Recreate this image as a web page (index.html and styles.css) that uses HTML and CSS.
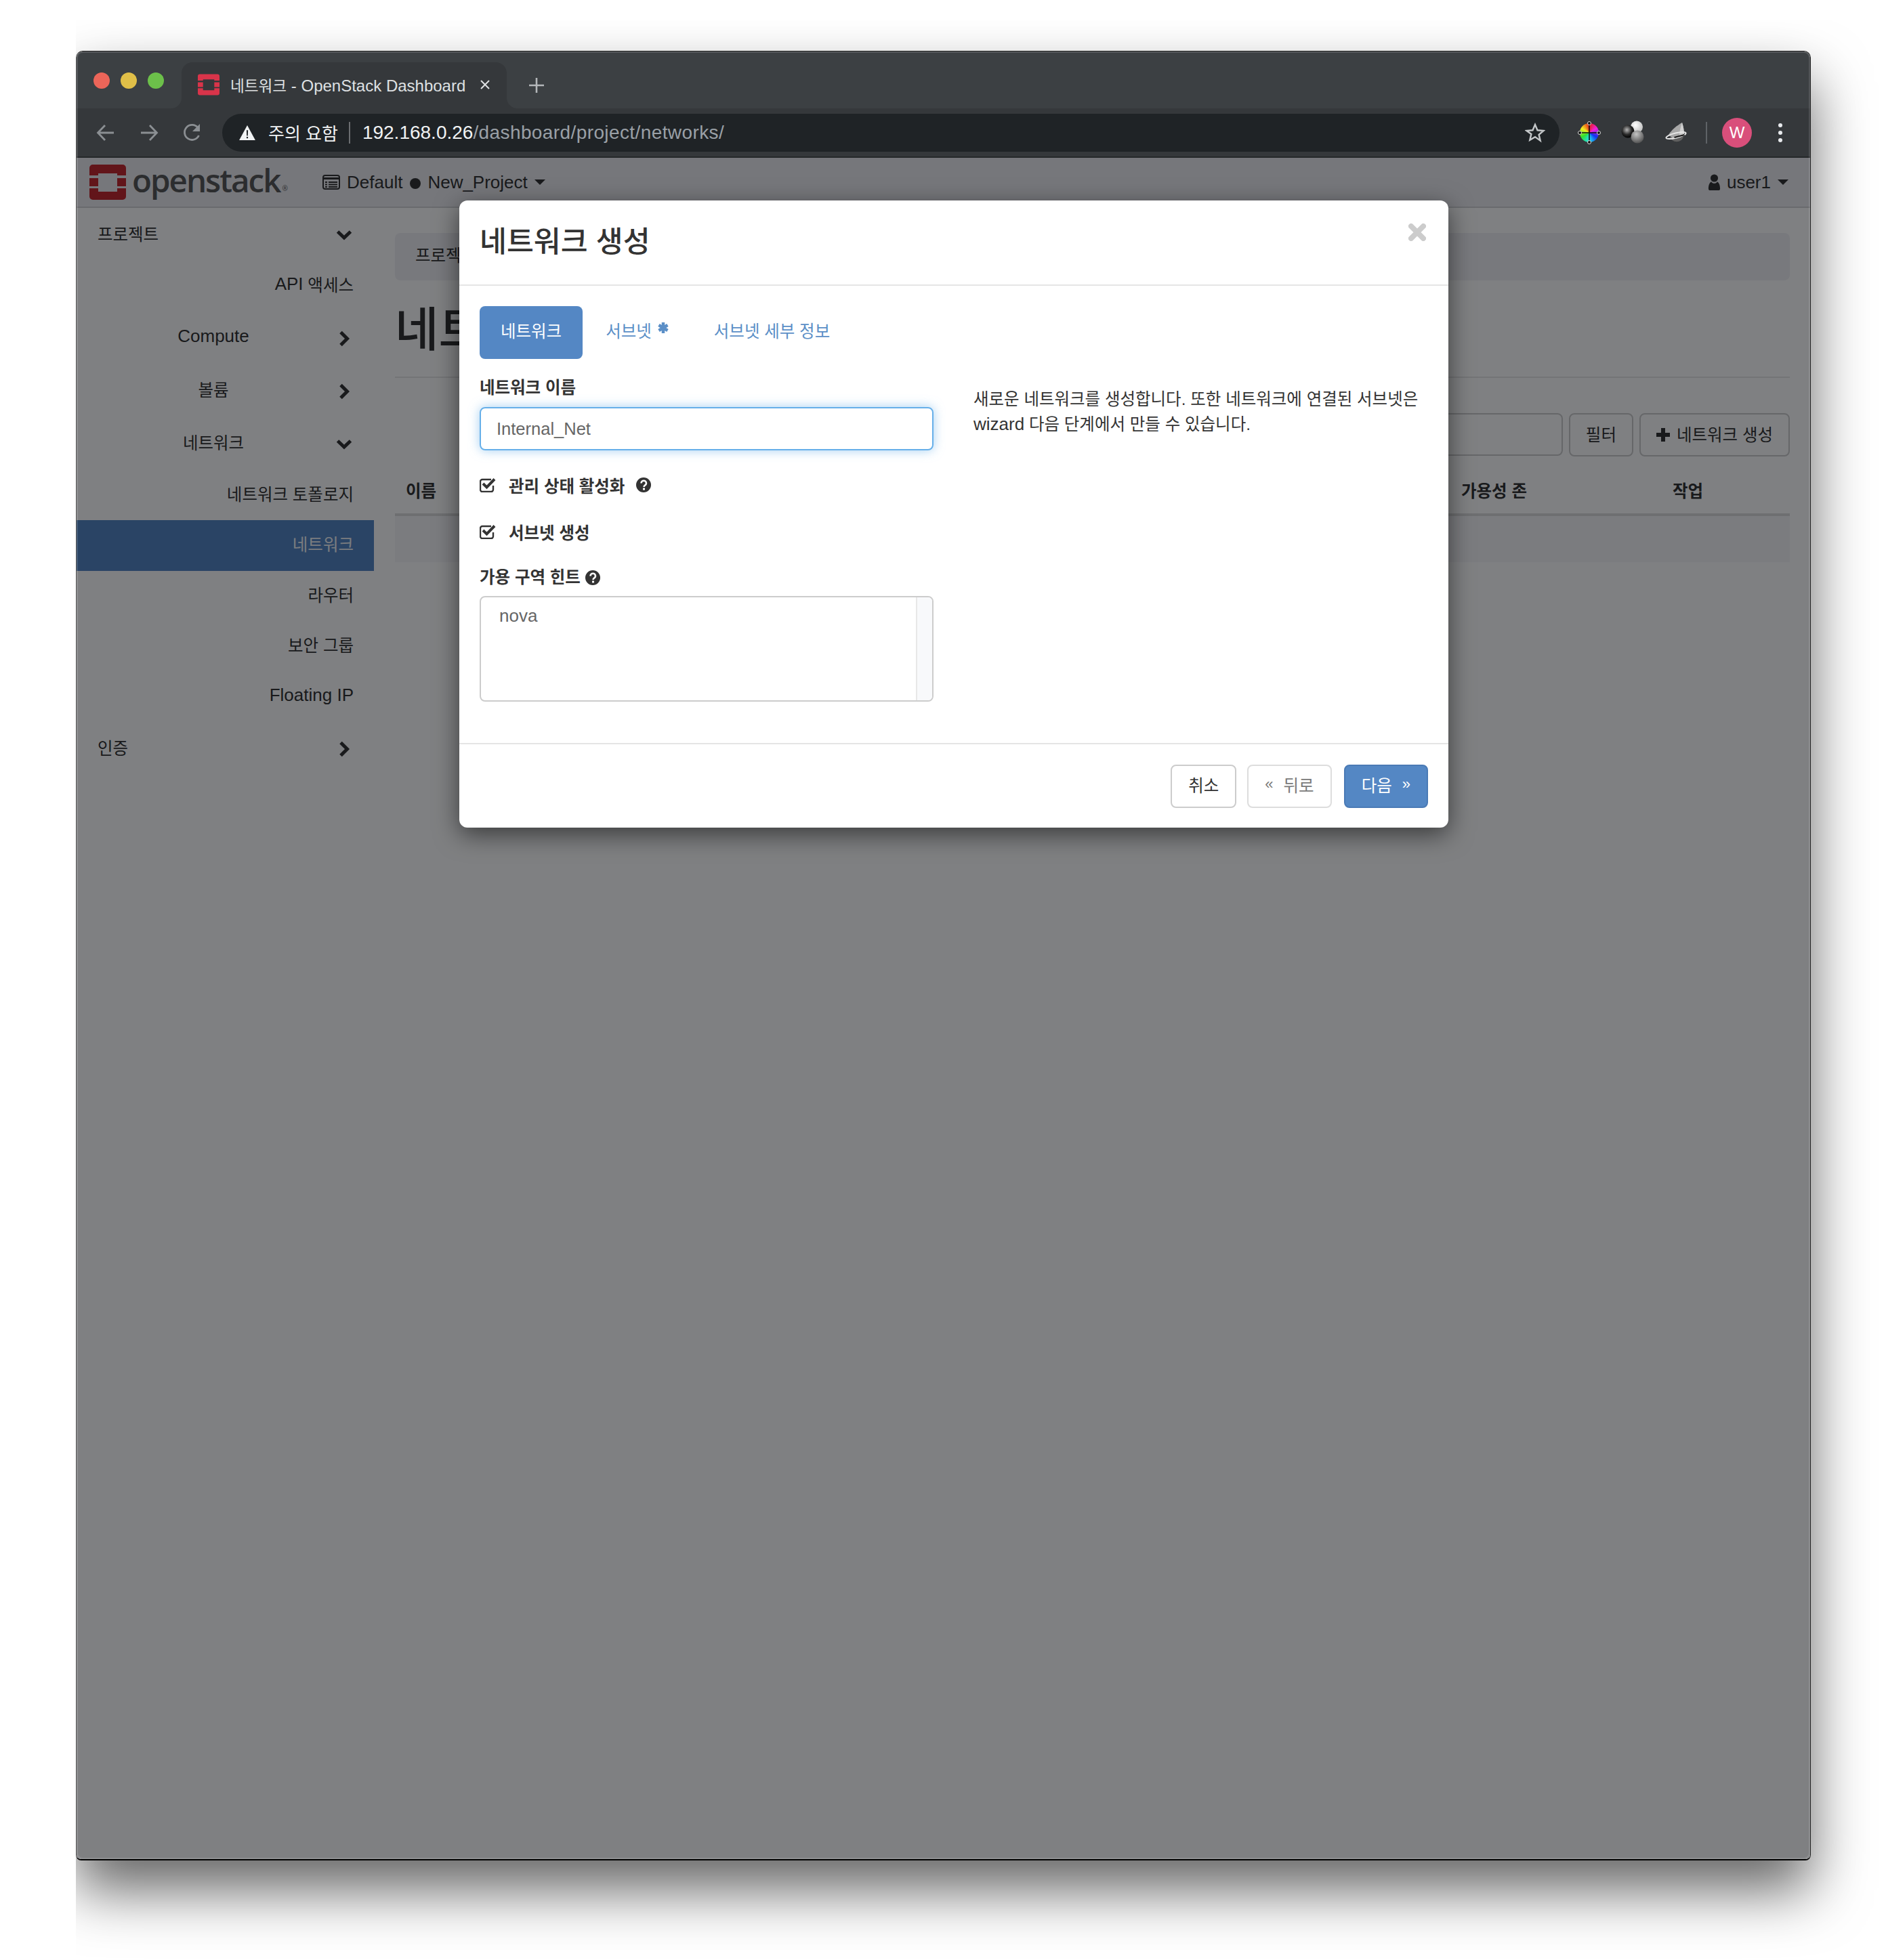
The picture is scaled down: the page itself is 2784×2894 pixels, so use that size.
FILE: index.html
```html
<!DOCTYPE html>
<html lang="ko">
<head>
  <meta charset="UTF-8">
  <title>네트워크 - OpenStack Dashboard</title>
  <link rel="stylesheet" href="styles.css">
</head>
<body>

<div class="shot">
<div class="window">

  <div class="titlebar">
    <div class="lights">
      <span class="light red"></span>
      <span class="light yellow"></span>
      <span class="light green"></span>
    </div>
    <div class="tab">
      <svg class="favicon" viewBox="0 0 54 52">
        <path fill="#d9344a" d="M5 0h44a5 5 0 0 1 5 5v11H41v-3H13v3H0V5a5 5 0 0 1 5-5zM0 20h13v12H0zM41 20h13v12H41zM0 35h13v5h28v-5h13v12a5 5 0 0 1-5 5H5a5 5 0 0 1-5-5z"/>
      </svg>
      <span class="tab-title"><span class="tab-ko">네트워크</span> - OpenStack Dashboard</span>
      <svg class="tab-close" viewBox="0 0 16 16"><path d="M2 2l12 12M14 2L2 14" stroke="#dfe1e3" stroke-width="2" fill="none"/></svg>
    </div>
    <svg class="new-tab" viewBox="0 0 24 24"><path d="M12 1v22M1 12h22" stroke="#b4b7ba" stroke-width="2.6" fill="none"/></svg>
  </div>

  <div class="toolbar">
    <svg class="nav-icon" viewBox="0 0 28 28"><path d="M26 14H3M13 3L2.500 14 13 25" stroke="#8b8f93" stroke-width="2.800" fill="none"/></svg>
    <svg class="nav-icon" viewBox="0 0 28 28"><path d="M2 14h23M15 3l10.500 11L15 25" stroke="#8b8f93" stroke-width="2.800" fill="none"/></svg>
    <svg class="nav-icon" viewBox="0 0 28 28"><path d="M23.500 18a11 11 0 1 1-1.500-11.500" stroke="#8b8f93" stroke-width="2.800" fill="none"/><path d="M25 1v11H14z" fill="#8b8f93"/></svg>
    <div class="omnibox">
      <svg class="warn" viewBox="0 0 26 24"><path d="M13 0l13 24H0z" fill="#f1f3f4"/><path d="M11.800 8h2.400l-.3 9h-1.800zM11.800 18.500h2.400v2.500h-2.400z" fill="#1f2326"/></svg>
      <span class="warn-text">주의 요함</span>
      <span class="omni-sep"></span>
      <span class="url"><b>192.168.0.26</b>/dashboard/project/networks/</span>
      <svg class="star" viewBox="0 0 30 30"><path d="M15 3l3.500 8.300 9 .7-6.900 5.900 2.100 8.800L15 21.100l-7.700 4.600 2.100-8.800L2.500 12l9-.7z" stroke="#c4c7c9" stroke-width="2.400" fill="none"/></svg>
    </div>
    <div class="extensions">
      <div class="ext-wheel">
        <svg class="wheel-handles" viewBox="0 0 36 36">
          <path d="M18 4v28M4 18h28" stroke="#111" stroke-width="1.600"/>
          <g fill="#111" stroke="#ddd" stroke-width="1"><circle cx="18" cy="4" r="2.500"/><circle cx="18" cy="32" r="2.500"/><circle cx="4" cy="18" r="2.500"/><circle cx="32" cy="18" r="2.500"/></g>
        </svg>
      </div>
      <svg class="ext" viewBox="0 0 36 36">
        <defs>
          <radialGradient id="ballDark" cx=".42" cy=".38" r=".62"><stop offset="0" stop-color="#b5b5b5"/><stop offset=".6" stop-color="#2a2a2a"/><stop offset="1" stop-color="#000"/></radialGradient>
          <radialGradient id="ballLight" cx=".4" cy=".35" r=".7"><stop offset="0" stop-color="#fff"/><stop offset="1" stop-color="#bbb"/></radialGradient>
          <radialGradient id="ballGrey" cx=".42" cy=".3" r=".75"><stop offset="0" stop-color="#c4c4c4"/><stop offset="1" stop-color="#4c4c4c"/></radialGradient>
        </defs>
        <circle cx="24" cy="9.500" r="9" fill="url(#ballLight)"/>
        <circle cx="11" cy="16" r="9.500" fill="url(#ballDark)"/>
        <circle cx="25" cy="24" r="9.500" fill="url(#ballGrey)"/>
      </svg>
      <svg class="ext" viewBox="0 0 36 36">
        <path d="M9 24a10.500 10.500 0 0 0 20 0z" fill="#5f5f5f"/>
        <path d="M27 3C20 7 12 13 7 21l6 5 17-5c0-6-1-12-3-18z" fill="#a8a8a8"/>
        <path d="M27 3c2 6 3 12 3 18l-7 2c0-7 2-14 4-20z" fill="#cfcfcf"/>
        <ellipse cx="18" cy="22" rx="15" ry="3.600" transform="rotate(-14 18 22)" fill="none" stroke="#e6e6e6" stroke-width="2"/>
        <path d="M15 24l15-4 1 2-15 4z" fill="#1c1c1c"/>
      </svg>
    </div>
    <span class="ext-sep"></span>
    <div class="avatar">W</div>
    <div class="menu-dots"><span></span><span></span><span></span></div>
  </div>

  <div class="page">
    <header class="topbar">
      <div class="brand">
        <svg class="logo" viewBox="0 0 54 52">
          <path fill="#c4282e" d="M5 0h44a5 5 0 0 1 5 5v11H41v-3H13v3H0V5a5 5 0 0 1 5-5zM0 20h13v12H0zM41 20h13v12H41zM0 35h13v5h28v-5h13v12a5 5 0 0 1-5 5H5a5 5 0 0 1-5-5z"/>
        </svg>
        <span class="wordmark">openstack</span>
        <span class="registered">®</span>
      </div>
      <div class="project-picker latin">
        <svg class="ctx-icon" viewBox="0 0 26 22"><rect x="1" y="1" width="24" height="20" rx="3" fill="none" stroke="#333" stroke-width="2"/><path d="M1 4h24v3H1z" fill="#333"/><path d="M4 10h3v2H4zM9 10h13v2H9zM4 13.500h3v2H4zM9 13.500h13v2H9zM4 17h3v2H4zM9 17h13v2H9z" fill="#333"/></svg>
        <span>Default</span>
        <span class="dot"></span>
        <span>New_Project</span>
        <span class="caret"></span>
      </div>
      <div class="user-menu latin">
        <svg class="user-icon" viewBox="0 0 20 28"><circle cx="10" cy="7" r="6.500" fill="#333"/><path d="M0 25c0-8 3-11 5-12 1 2 3 3 5 3s4-1 5-3c2 1 5 4 5 12 0 2-1 3-3 3H3c-2 0-3-1-3-3z" fill="#333"/></svg>
        <span>user1</span>
        <span class="caret"></span>
      </div>
    </header>

    <div class="layout">
      <nav class="sidebar">
        <div class="nav-head"><span class="nav-left">프로젝트</span><svg class="chev" viewBox="0 0 24 24"><path d="M2.500 7l9.500 9 9.500-9" stroke="#333" stroke-width="5" fill="none"/></svg></div>
        <a class="nav-sub"><span class="latin">API</span>&nbsp;액세스</a>
        <div class="nav-head"><span class="nav-mid latin">Compute</span><svg class="chev" viewBox="0 0 24 24"><path d="M7 2.500l9.500 9.500L7 21.500" stroke="#333" stroke-width="5" fill="none"/></svg></div>
        <div class="nav-head"><span class="nav-mid">볼륨</span><svg class="chev" viewBox="0 0 24 24"><path d="M7 2.500l9.500 9.500L7 21.500" stroke="#333" stroke-width="5" fill="none"/></svg></div>
        <div class="nav-head"><span class="nav-mid">네트워크</span><svg class="chev" viewBox="0 0 24 24"><path d="M2.500 7l9.500 9 9.500-9" stroke="#333" stroke-width="5" fill="none"/></svg></div>
        <a class="nav-sub">네트워크 토폴로지</a>
        <a class="nav-sub active">네트워크</a>
        <a class="nav-sub">라우터</a>
        <a class="nav-sub">보안 그룹</a>
        <a class="nav-sub latin">Floating IP</a>
        <div class="nav-head"><span class="nav-left">인증</span><svg class="chev" viewBox="0 0 24 24"><path d="M7 2.500l9.500 9.500L7 21.500" stroke="#333" stroke-width="5" fill="none"/></svg></div>
      </nav>

      <main class="content">
        <div class="breadcrumb">프로젝트</div>
        <h1 class="page-title">네트워크</h1>
        <div class="actions">
          <div class="filter-input"></div>
          <button class="btn">필터</button>
          <button class="btn"><svg class="plus" viewBox="0 0 20 20"><path d="M10 0v20M0 10h20" stroke="#333" stroke-width="6"/></svg>네트워크 생성</button>
        </div>
        <div class="table-head">
          <span>이름</span>
          <span class="col-zone">가용성 존</span>
          <span class="col-action">작업</span>
        </div>
        <div class="table-row"></div>
      </main>
    </div>

    <div class="backdrop"></div>

    <div class="modal">
      <div class="modal-header">
        <h3>네트워크 생성</h3>
        <svg class="modal-close" viewBox="0 0 26 26"><path d="M4 4l18 18M22 4L4 22" stroke="#ccc" stroke-width="8" stroke-linecap="round"/></svg>
      </div>
      <div class="modal-body">
        <div class="wizard-tabs">
          <a class="wizard-tab active">네트워크</a>
          <a class="wizard-tab">서브넷<svg class="asterisk" viewBox="0 0 16 16"><path d="M8 0v16M1.500 4l13 8M14.500 4l-13 8" stroke="#5b8fc7" stroke-width="4.500"/></svg></a>
          <a class="wizard-tab">서브넷 세부 정보</a>
        </div>
        <div class="form-row">
          <div class="form-col">
            <label class="field-label">네트워크 이름</label>
            <div class="text-input">Internal_Net</div>
            <label class="check-row">
              <svg class="check" viewBox="0 0 24 22"><path d="M20 12v6a3 3 0 0 1-3 3H4a3 3 0 0 1-3-3V6a3 3 0 0 1 3-3h13" stroke="#333" stroke-width="2.400" fill="none"/><path d="M5 9l5.500 5.500L22 2.500" stroke="#333" stroke-width="4" fill="none"/></svg>
              <span>관리 상태 활성화</span>
              <svg class="help" viewBox="0 0 22 22"><circle cx="11" cy="11" r="11" fill="#333"/><path d="M7.500 8.500c0-5 7.500-5 7.500 0 0 3-3.500 3-3.500 5.500" stroke="#fff" stroke-width="2.600" fill="none"/><path d="M10 15.500h3v3h-3z" fill="#fff"/></svg>
            </label>
            <label class="check-row">
              <svg class="check" viewBox="0 0 24 22"><path d="M20 12v6a3 3 0 0 1-3 3H4a3 3 0 0 1-3-3V6a3 3 0 0 1 3-3h13" stroke="#333" stroke-width="2.400" fill="none"/><path d="M5 9l5.500 5.500L22 2.500" stroke="#333" stroke-width="4" fill="none"/></svg>
              <span>서브넷 생성</span>
            </label>
            <label class="field-label hint-label">가용 구역 힌트
              <svg class="help" viewBox="0 0 22 22"><circle cx="11" cy="11" r="11" fill="#333"/><path d="M7.500 8.500c0-5 7.500-5 7.500 0 0 3-3.500 3-3.500 5.500" stroke="#fff" stroke-width="2.600" fill="none"/><path d="M10 15.500h3v3h-3z" fill="#fff"/></svg>
            </label>
            <div class="select-box">
              <div class="option latin">nova</div>
              <div class="scroll-track"></div>
            </div>
          </div>
          <p class="help-text">새로운 네트워크를 생성합니다. 또한 네트워크에 연결된 서브넷은<br><span class="latin">wizard</span> 다음 단계에서 만들 수 있습니다.</p>
        </div>
      </div>
      <div class="modal-footer">
        <button class="btn">취소</button>
        <button class="btn disabled"><i>«</i>뒤로</button>
        <button class="btn primary">다음<i>»</i></button>
      </div>
    </div>
  </div>

</div>
</div>

</body>
</html>
```

FILE: styles.css
```css
* {
  box-sizing: border-box;
}

html, body {
  margin: 0;
  background: #fff;
}

body {
  width: 2784px;
  height: 2894px;
  overflow: hidden;
  font-family: "Liberation Sans", "Noto Sans CJK KR", sans-serif;
  font-size: 24.500px;
  color: #333;
}

/* hangul comes out wide next to latin, so latin text gets its own size */
.latin {
  font-size: 26px;
}

/* shadow is cut off on the left, like the original capture */
.shot {
  margin: 30px 0 0 112px;
  padding-top: 45px;
  width: 2672px;
  height: 2864px;
  overflow: hidden;
}

.window {
  position: relative;
  width: 2561px;
  height: 2672px;
  display: flex;
  flex-direction: column;
  border-radius: 10px 10px 8px 8px;
  background: #fff;
  box-shadow: 0 44px 84px rgba(0,0,0,0.6);
  overflow: hidden;
  border: 1px solid #222;
  border-bottom: 2px solid #000;
  border-left-color: #555;
}

.window::after {
  content: "";
  position: absolute;
  inset: 0;
  border-radius: 9px;
  box-shadow: inset 0 0 0 2px rgba(255,255,255,0.13);
  pointer-events: none;
}

/* browser chrome */
.titlebar {
  height: 84px;
  flex: none;
  display: flex;
  align-items: flex-end;
  background: #3c4043;
  padding-left: 25px;
}

.lights {
  display: flex;
  gap: 16px;
  align-self: flex-start;
  margin-top: 31px;
  width: 130px;
}

.light {
  width: 24px;
  height: 24px;
  border-radius: 50%;
}

.red { background: #ec6559; }
.yellow { background: #e0bf48; }
.green { background: #6cc04a; }

.tab {
  position: relative;
  width: 480px;
  height: 68px;
  background: #35383b;
  border-radius: 16px 16px 0 0;
  display: flex;
  align-items: center;
  padding: 0 0 2px 24px;
  color: #dfe1e3;
}

.tab::before,
.tab::after {
  content: "";
  position: absolute;
  bottom: 0;
  width: 16px;
  height: 16px;
}

.tab::before {
  left: -16px;
  background: radial-gradient(circle at 0 0, #3c4043 15.500px, #35383b 16.500px);
}

.tab::after {
  right: -16px;
  background: radial-gradient(circle at 100% 0, #3c4043 15.500px, #35383b 16.500px);
}

.favicon {
  width: 32px;
  height: 32px;
  margin-right: 16px;
}

.tab-title {
  font-size: 24px;
  white-space: nowrap;
  width: 368px;
}

.tab-ko {
  font-size: 22.600px;
}

.tab-close {
  width: 16px;
  height: 16px;
}

.new-tab {
  width: 24px;
  height: 24px;
  margin: 0 0 22px 32px;
}

.toolbar {
  height: 73px;
  flex: none;
  display: flex;
  align-items: center;
  background: #35383b;
  border-bottom: 2px solid #25282a;
  padding: 1px 0 0 29px;
}

.nav-icon {
  width: 28px;
  height: 28px;
  margin-right: 36px;
}

.omnibox {
  width: 1974px;
  height: 56px;
  margin-left: -6px;
  border-radius: 28px;
  background: #1f2326;
  display: flex;
  align-items: center;
  padding: 0 0 0 24px;
  color: #f1f3f4;
}

.warn {
  width: 26px;
  height: 22px;
  margin-right: 18px;
}

.warn-text {
  font-size: 26px;
  margin-top: -2px;
}

.omni-sep {
  width: 2px;
  height: 32px;
  background: #6a6d70;
  margin: 0 18px 0 16px;
}

.url {
  font-size: 28px;
  letter-spacing: 0.400px;
  color: #9aa0a6;
  white-space: nowrap;
  flex: 1;
}

.url b {
  font-weight: normal;
  letter-spacing: 0;
  color: #f1f3f4;
}

.star {
  width: 30px;
  height: 30px;
  margin-right: 21px;
}

.extensions {
  display: flex;
  align-items: center;
  gap: 28px;
  margin-left: 26px;
}

.ext-wheel {
  position: relative;
  width: 28px;
  height: 28px;
  margin: 0 4px;
  border-radius: 50%;
  background: conic-gradient(#e8201c, #f020e0 60deg, #1030f0 120deg, #20e0f0 180deg, #30e030 240deg, #f0f020 300deg, #e8201c);
}

.wheel-handles {
  position: absolute;
  left: -4px;
  top: -4px;
  width: 36px;
  height: 36px;
}

.ext {
  width: 36px;
  height: 36px;
}

.ext-sep {
  width: 2px;
  height: 32px;
  background: #5f6367;
  margin: 0 22px 0 26px;
}

.avatar {
  width: 44px;
  height: 44px;
  border-radius: 50%;
  background: #d94f7b;
  color: #fff;
  font-size: 24px;
  display: flex;
  align-items: center;
  justify-content: center;
}

.menu-dots {
  display: flex;
  flex-direction: column;
  gap: 5px;
  margin-left: 39px;
}

.menu-dots span {
  width: 6px;
  height: 6px;
  border-radius: 50%;
  background: #e8eaed;
}

/* dashboard underneath the dialog */
.page {
  position: relative;
  flex: 1;
  display: flex;
  flex-direction: column;
  background: #fff;
}

.topbar {
  height: 74px;
  flex: none;
  display: flex;
  align-items: center;
  background: #ecedf0;
  border-bottom: 2px solid #d3d4d6;
  padding: 0 32px 0 19px;
}

.brand {
  display: flex;
  align-items: center;
  width: 344px;
}

.logo {
  width: 54px;
  height: 52px;
  margin-right: 9px;
}

.wordmark {
  font-family: "Open Sans", sans-serif;
  font-size: 47.500px;
  font-weight: 600;
  letter-spacing: -2px;
  color: #585858;
  line-height: 1;
  margin-top: -6px;
  white-space: nowrap;
}

.registered {
  font-family: "Open Sans", sans-serif;
  font-size: 10px;
  line-height: 1;
  color: #585858;
  margin: 18px 0 0 3px;
}

.project-picker {
  display: flex;
  align-items: center;
  gap: 10px;
}

.ctx-icon {
  width: 26px;
  height: 22px;
}

.dot {
  width: 16px;
  height: 16px;
  border-radius: 50%;
  background: #333;
  margin: 4px 0 0 1px;
}

.caret {
  width: 0;
  height: 0;
  border: 8px solid transparent;
  border-top: 8px solid #333;
  border-bottom: 0;
}

.user-menu {
  margin-left: auto;
  display: flex;
  align-items: center;
  gap: 8px;
}

.user-menu .caret {
  margin-left: 2px;
}

.user-icon {
  width: 21px;
  height: 24px;
}

.layout {
  flex: 1;
  display: flex;
}

.sidebar {
  width: 439px;
  flex: none;
}

.nav-head {
  display: flex;
  align-items: center;
  height: 78px;
  padding: 0 32px 4px 31px;
  position: relative;
}

.nav-left {
  flex: 1;
}

.nav-mid {
  flex: 1;
  text-align: center;
  padding-right: 34px;
}

.chev {
  position: absolute;
  right: 32px;
  top: 28px;
  width: 24px;
  height: 24px;
}

.nav-sub {
  display: flex;
  align-items: center;
  justify-content: flex-end;
  height: 74.500px;
  padding: 0 30px 5px 0;
}

.nav-sub.active {
  background: #5487c4;
  color: #f4f6f9;
}

.content {
  flex: 1;
  padding: 37px 30px 0 31px;
}

.breadcrumb {
  height: 70px;
  border-radius: 8px;
  background: #f0f1f4;
  padding: 0 30px;
  line-height: 68px;
}

h1.page-title {
  margin: 34px 0 0;
  font-size: 70px;
  font-weight: 500;
  line-height: 80px;
  height: 110px;
  border-bottom: 2px solid #e6e6e6;
}

.actions {
  display: flex;
  justify-content: flex-end;
  gap: 9px;
  margin-top: 52px;
}

.filter-input {
  width: 600px;
  height: 63px;
  border: 2px solid #ccc;
  border-radius: 8px;
}

.btn {
  display: inline-flex;
  align-items: center;
  justify-content: center;
  height: 64px;
  padding: 0 23px 4px;
  font-family: inherit;
  font-size: 24.500px;
  color: #333;
  background: #fff;
  border: 2px solid #ccc;
  border-radius: 8px;
}

.plus {
  width: 20px;
  height: 20px;
  margin: 3px 10px 0 0;
}

.table-head {
  position: relative;
  height: 88px;
  padding: 32px 16px 0;
  font-weight: bold;
  border-bottom: 4px solid #ddd;
}

.col-zone {
  position: absolute;
  left: 1574px;
}

.col-action {
  position: absolute;
  left: 1886px;
}

.table-row {
  height: 68px;
  background: #f6f6f8;
}

.backdrop {
  position: absolute;
  inset: 0;
  background: rgba(0,2,6,0.5);
}

/* dialog */
.modal {
  position: absolute;
  top: 63px;
  left: 565px;
  width: 1460px;
  height: 926px;
  background: #fff;
  border-radius: 12px;
  box-shadow: 0 10px 36px rgba(0,0,0,0.55);
  display: flex;
  flex-direction: column;
}

.modal-header {
  height: 126px;
  flex: none;
  position: relative;
  border-bottom: 2px solid #e5e5e5;
  padding: 0 30px;
  display: flex;
  align-items: center;
}

.modal-header h3 {
  margin: 0;
  font-size: 43.400px;
  font-weight: 500;
  line-height: 1;
}

.modal-close {
  position: absolute;
  right: 33px;
  top: 34px;
  width: 26px;
  height: 26px;
}

.modal-body {
  flex: 1;
  padding: 30px 30px 0;
}

.wizard-tabs {
  display: flex;
  gap: 4px;
  height: 78px;
}

.wizard-tab {
  display: flex;
  align-items: center;
  padding: 0 30px 7px;
  border-radius: 8px;
  color: #5b8fc7;
}

.wizard-tab.active {
  background: #5487c4;
  color: #fff;
  padding: 0 31px 7px;
}

.asterisk {
  width: 16px;
  height: 16px;
  margin: -8px 3px 0 9px;
}

.form-row {
  display: flex;
  gap: 59px;
}

.form-col {
  width: 670px;
  flex: none;
}

.field-label {
  display: block;
  font-weight: bold;
  line-height: 36px;
  margin-top: 25px;
  margin-bottom: 10px;
}

.text-input {
  height: 64px;
  border: 2px solid #66afe9;
  border-radius: 8px;
  box-shadow: 0 0 16px rgba(102,175,233,0.6);
  padding: 0 23px;
  font-size: 25.500px;
  line-height: 60px;
  color: #666;
}

.check-row {
  display: flex;
  align-items: center;
  font-weight: bold;
  height: 36px;
  margin-top: 33px;
}

.check {
  width: 24px;
  height: 22px;
  margin-right: 19px;
}

.check-row .help {
  margin-left: 17px;
}

.help {
  width: 22px;
  height: 22px;
  vertical-align: -3px;
}

.hint-label {
  margin-top: 32px;
  margin-bottom: 9px;
}

.select-box {
  display: flex;
  height: 156px;
  border: 2px solid #ccc;
  border-radius: 8px;
  color: #666;
}

.option {
  flex: 1;
  padding: 12px 27px;
}

.scroll-track {
  width: 24px;
  background: #f8f9fb;
  border-left: 2px solid #e8e8e8;
  border-radius: 0 6px 6px 0;
}

.help-text {
  flex: 1;
  margin: 41px 0 0;
  line-height: 37px;
  color: #333;
  white-space: nowrap;
}

.modal-footer {
  height: 125px;
  flex: none;
  border-top: 2px solid #e5e5e5;
  padding: 30px 30px 0;
  display: flex;
  justify-content: flex-end;
  gap: 16px;
}

.modal-footer .btn {
  padding: 0 24px 6px;
}

.modal-footer .btn.primary {
  margin-left: 2px;
}

.btn i {
  font-style: normal;
  font-size: 22px;
}

.btn.disabled {
  opacity: 0.65;
}

.btn.disabled i {
  margin-right: 15px;
}

.btn.primary {
  background: #5487c4;
  border-color: #4a7ab5;
  color: #fff;
}

.btn.primary i {
  margin-left: 15px;
}
```
